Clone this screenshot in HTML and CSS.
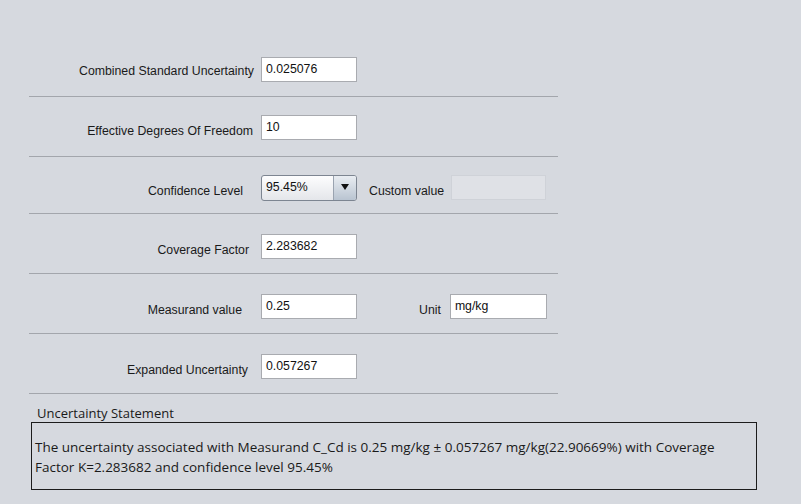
FILE: index.html
```html
<!DOCTYPE html>
<html lang="en">
<head>
<meta charset="utf-8">
<title>Expanded Uncertainty</title>
<link rel="stylesheet" href="styles.css">
</head>
<body>
<div class="panel">
  <div class="form">
    <div class="row r1">
      <span class="label">Combined Standard Uncertainty</span>
      <span class="field">0.025076</span>
    </div>
    <div class="row r2">
      <span class="label">Effective Degrees Of Freedom</span>
      <span class="field">10</span>
    </div>
    <div class="row r3">
      <span class="label">Confidence Level</span>
      <span class="combo"><span class="combo-text">95.45%</span><span class="combo-btn"><svg width="8" height="6" viewBox="0 0 8 6"><path d="M0 0H8L4 6Z" fill="#111"/></svg></span></span>
      <span class="label side custom">Custom value</span>
      <span class="field field-disabled"></span>
    </div>
    <div class="row r4">
      <span class="label">Coverage Factor</span>
      <span class="field">2.283682</span>
    </div>
    <div class="row r5">
      <span class="label">Measurand value</span>
      <span class="field">0.25</span>
      <span class="label side unit">Unit</span>
      <span class="field field-unit">mg/kg</span>
    </div>
    <div class="row r6">
      <span class="label">Expanded Uncertainty</span>
      <span class="field">0.057267</span>
    </div>
  </div>
  <div class="statement">
    <div class="statement-title">Uncertainty Statement</div>
    <div class="statement-box">The uncertainty associated with Measurand C_Cd is 0.25 mg/kg ± 0.057267 mg/kg(22.90669%) with Coverage Factor K=2.283682 and confidence level 95.45%</div>
  </div>
</div>
</body>
</html>
```

FILE: styles.css
```css
html, body {
  margin: 0;
  padding: 0;
  background: #d6d9df;
}

body {
  width: 801px;
  height: 504px;
  overflow: hidden;
  font-family: "Liberation Sans", Arial, sans-serif;
  font-size: 12.3px;
  color: #1a1a1a;
}

.panel {
  padding-top: 36px;
}

/* form rows separated by etched lines */
.form {
  margin-left: 29px;
  width: 529px;
}

.row {
  display: flex;
  align-items: flex-start;
  border-bottom: 1px solid #a3a6ac;
  box-sizing: border-box;
}

.r1 { height: 61px; padding-top: 21px; }
.r2 { height: 60px; padding-top: 18px; }
.r3 { height: 57px; padding-top: 18px; }
.r4 { height: 60px; padding-top: 20px; }
.r5 { height: 60px; padding-top: 20px; }
.r6 { height: 60px; padding-top: 20px; }

.label {
  box-sizing: border-box;
  width: 232px;
  height: 25px;
  line-height: 25px;
  margin-top: 4px;
  text-align: right;
  flex: none;
  white-space: nowrap;
}

.r1 .label { padding-right: 7px; margin-top: 2px; }
.r2 .label { padding-right: 8px; }
.r3 .label { padding-right: 18px; }
.r4 .label { padding-right: 12px; }
.r5 .label { padding-right: 19px; }
.r6 .label { padding-right: 13px; }

.row .label.side {
  width: auto;
  padding-right: 0;
  text-align: left;
}

.row .label.custom { margin-left: 12px; margin-right: 7px; }
.row .label.unit { margin-left: 62px; margin-right: 9px; }

.field {
  display: inline-block;
  box-sizing: border-box;
  width: 96px;
  height: 25px;
  line-height: 23px;
  padding-left: 4px;
  background: #fff;
  border: 1px solid #a9abb0;
  color: #111;
  flex: none;
}

.field-disabled {
  width: 95px;
  background: #dfe1e6;
  border-color: #cfd2d8;
}

.field-unit {
  width: 97px;
}

/* combo box with gradient arrow button */
.combo {
  display: inline-flex;
  box-sizing: border-box;
  width: 96px;
  height: 26px;
  border: 1px solid #7d8591;
  border-radius: 3px;
  background: linear-gradient(#fdfdfe, #e4e6ea);
  overflow: hidden;
  flex: none;
  line-height: 22px;
}

.combo-text {
  flex: 1;
  padding-left: 4px;
  color: #111;
}

.combo-btn {
  width: 22px;
  border-left: 1px solid #9aa3b0;
  background: linear-gradient(#e9edf2, #b9c4d1);
  display: flex;
  align-items: center;
  justify-content: center;
}

.combo-btn svg {
  display: block;
  margin-top: -2px;
}

/* statement */
.statement {
  margin-left: 31px;
  width: 726px;
}

.statement-title {
  font-family: "Open Sans", "Noto Sans", sans-serif;
  font-size: 13px;
  color: #1a1a1a;
  padding-left: 6px;
  padding-top: 10px;
  height: 18px;
  line-height: 19px;
}

.statement-box {
  box-sizing: border-box;
  height: 68px;
  border: 1px solid #1c1c1c;
  padding: 14px 3px 0;
  font-family: "Open Sans", "Noto Sans", sans-serif;
  font-size: 13.5px;
  line-height: 20px;
  color: #1a1a1a;
}
```
